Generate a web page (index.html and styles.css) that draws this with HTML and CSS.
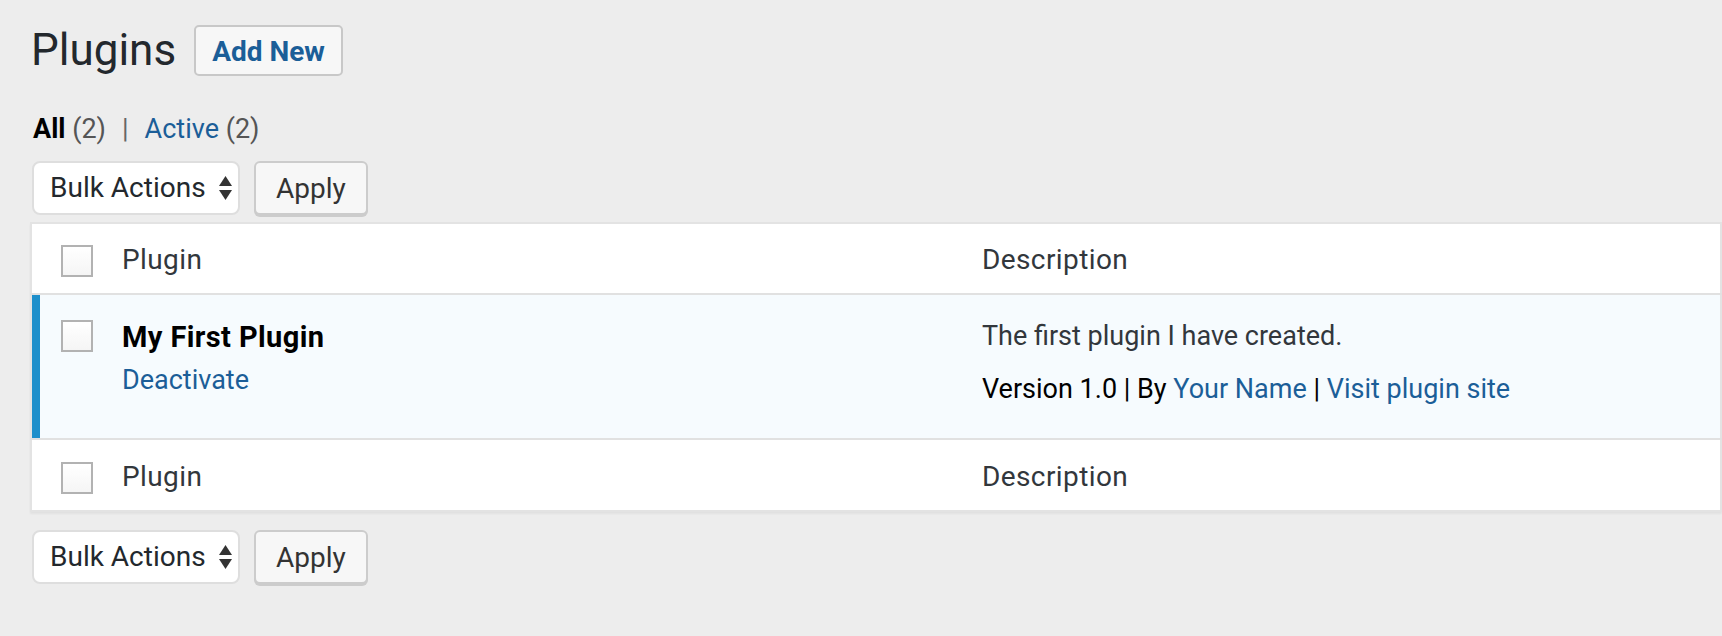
FILE: index.html
```html
<!DOCTYPE html>
<html lang="en">
<head>
    <meta charset="UTF-8">
    <meta name="viewport" content="width=device-width, initial-scale=1.0">
    <title>Plugins</title>
    <link rel="stylesheet" href="styles.css">
</head>
<body>

    <div class="wrap">
        <div class="page-head">
            <h1>Plugins</h1>
            <a class="page-title-action" href="#">Add New</a>
        </div>

        <ul class="subsubsub">
            <li class="current">All <span class="count">(2)</span></li>
            <li class="sep">|</li>
            <li><a href="#">Active</a> <span class="count">(2)</span></li>
        </ul>

        <div class="tablenav top">
            <div class="select">
                <span>Bulk Actions</span>
                <svg class="arrows" width="13" height="24" viewBox="0 0 13 24">
                    <polygon points="6.5,0 13,10 0,10"/>
                    <polygon points="0,14 13,14 6.5,24"/>
                </svg>
            </div>
            <button class="button">Apply</button>
        </div>

        <table class="plugins">
            <thead>
                <tr>
                    <td class="check-column"><span class="checkbox"></span></td>
                    <th class="col-name">Plugin</th>
                    <th class="col-desc">Description</th>
                </tr>
            </thead>
            <tbody>
                <tr class="active">
                    <td class="check-column"><span class="checkbox"></span></td>
                    <td class="plugin-title">
                        <strong>My First Plugin</strong>
                        <div class="row-actions"><a href="#">Deactivate</a></div>
                    </td>
                    <td class="plugin-desc">
                        <p>The first plugin I have created.</p>
                        <p class="meta">Version 1.0 | By <a href="#">Your Name</a> | <a href="#">Visit plugin site</a></p>
                    </td>
                </tr>
            </tbody>
            <tfoot>
                <tr>
                    <td class="check-column"><span class="checkbox"></span></td>
                    <th class="col-name">Plugin</th>
                    <th class="col-desc">Description</th>
                </tr>
            </tfoot>
        </table>

        <div class="tablenav bottom">
            <div class="select">
                <span>Bulk Actions</span>
                <svg class="arrows" width="13" height="24" viewBox="0 0 13 24">
                    <polygon points="6.5,0 13,10 0,10"/>
                    <polygon points="0,14 13,14 6.5,24"/>
                </svg>
            </div>
            <button class="button">Apply</button>
        </div>
    </div>

</body>
</html>
```

FILE: styles.css
```css
body {
    margin: 0;
    background-color: #ededed;
    font-family: Roboto, "Liberation Sans", Arial, sans-serif;
    font-size: 27px;
    line-height: 36px;
    color: #32373c;
}
a {
    color: #1b5e98;
    text-decoration: none;
}
.wrap {
    padding: 20px 0 40px 31px;
}
.page-head {
    display: flex;
    align-items: center;
}
h1 {
    margin: 0;
    font-size: 44px;
    line-height: 60px;
    font-weight: 400;
    color: #23282d;
}
.page-title-action {
    margin-left: 18px;
    padding: 2px 16px 0;
    font-size: 28px;
    line-height: 45px;
    border: 2px solid #c8c8c8;
    border-radius: 5px;
    background-color: #f7f7f7;
    font-weight: 700;
    color: #1b5e98;
}
.subsubsub {
    list-style: none;
    margin: 31px 0 0;
    padding: 0 0 0 2px;
    display: flex;
    gap: 16px;
}
.subsubsub .current {
    font-weight: 700;
    color: #000;
}
.subsubsub .count {
    font-weight: 400;
    color: #555;
}
.subsubsub .sep {
    color: #666;
}
.tablenav {
    display: flex;
    align-items: flex-start;
    gap: 14px;
}
.tablenav.top {
    margin: 14px 0 7px 1px;
}
.tablenav.bottom {
    margin: 18px 0 0 1px;
}
.select {
    box-sizing: border-box;
    width: 208px;
    height: 54px;
    display: flex;
    align-items: center;
    justify-content: space-between;
    padding: 0 6px 0 16px;
    background-color: #fff;
    border: 2px solid #dedede;
    border-radius: 8px;
    font-size: 28px;
    color: #23282d;
}
.select svg {
    fill: #333;
}
.button {
    box-sizing: border-box;
    height: 54px;
    padding: 0 20px;
    font-family: inherit;
    font-size: 28px;
    color: #333;
    background-color: #f7f7f7;
    border: 2px solid #cccccc;
    border-radius: 6px;
    box-shadow: 0 2px 0 #cccccc;
    cursor: pointer;
}
.plugins {
    box-sizing: border-box;
    width: calc(100% + 1px);
    margin-left: -1px;
    border-collapse: collapse;
    background-color: #fff;
    border: 2px solid #e3e3e3;
    box-shadow: 0 2px 2px rgba(0, 0, 0, 0.05);
}
.plugins th, .plugins td {
    text-align: left;
    vertical-align: top;
    font-weight: 400;
}
.plugins thead th, .plugins tfoot th {
    padding: 18px 20px 15px;
    font-size: 28px;
    letter-spacing: 0.4px;
    color: #32373c;
}
.plugins tfoot th {
    padding: 19px 20px 15px;
}
.plugins thead tr {
    border-bottom: 2px solid #e1e1e1;
}
.plugins tfoot tr {
    border-top: 2px solid #e1e1e1;
}
.check-column {
    width: 71px;
    box-sizing: border-box;
    padding: 21px 0 0 29px;
}
tfoot .check-column {
    padding-top: 22px;
}
.col-name {
    width: 820px;
}
.checkbox {
    display: block;
    box-sizing: border-box;
    width: 32px;
    height: 32px;
    border: 2px solid #b2b2b2;
    background: linear-gradient(#fff, #f5f5f5);
}
.plugins tr.active td {
    background-color: #f6fbfe;
}
.plugins tr.active .check-column {
    padding-top: 25px;
    box-shadow: inset 8px 0 0 #1d8fcb;
}
.plugin-title {
    padding: 22px 20px 0;
}
.plugin-title strong {
    display: block;
    font-size: 29px;
    line-height: 40px;
    letter-spacing: 0.4px;
    color: #000;
}
.row-actions {
    margin-top: 5px;
}
.plugin-desc {
    padding: 23px 20px 31px;
}
.plugin-desc p {
    margin: 0;
}
.plugin-desc .meta {
    margin-top: 17px;
    color: #000;
}
```
